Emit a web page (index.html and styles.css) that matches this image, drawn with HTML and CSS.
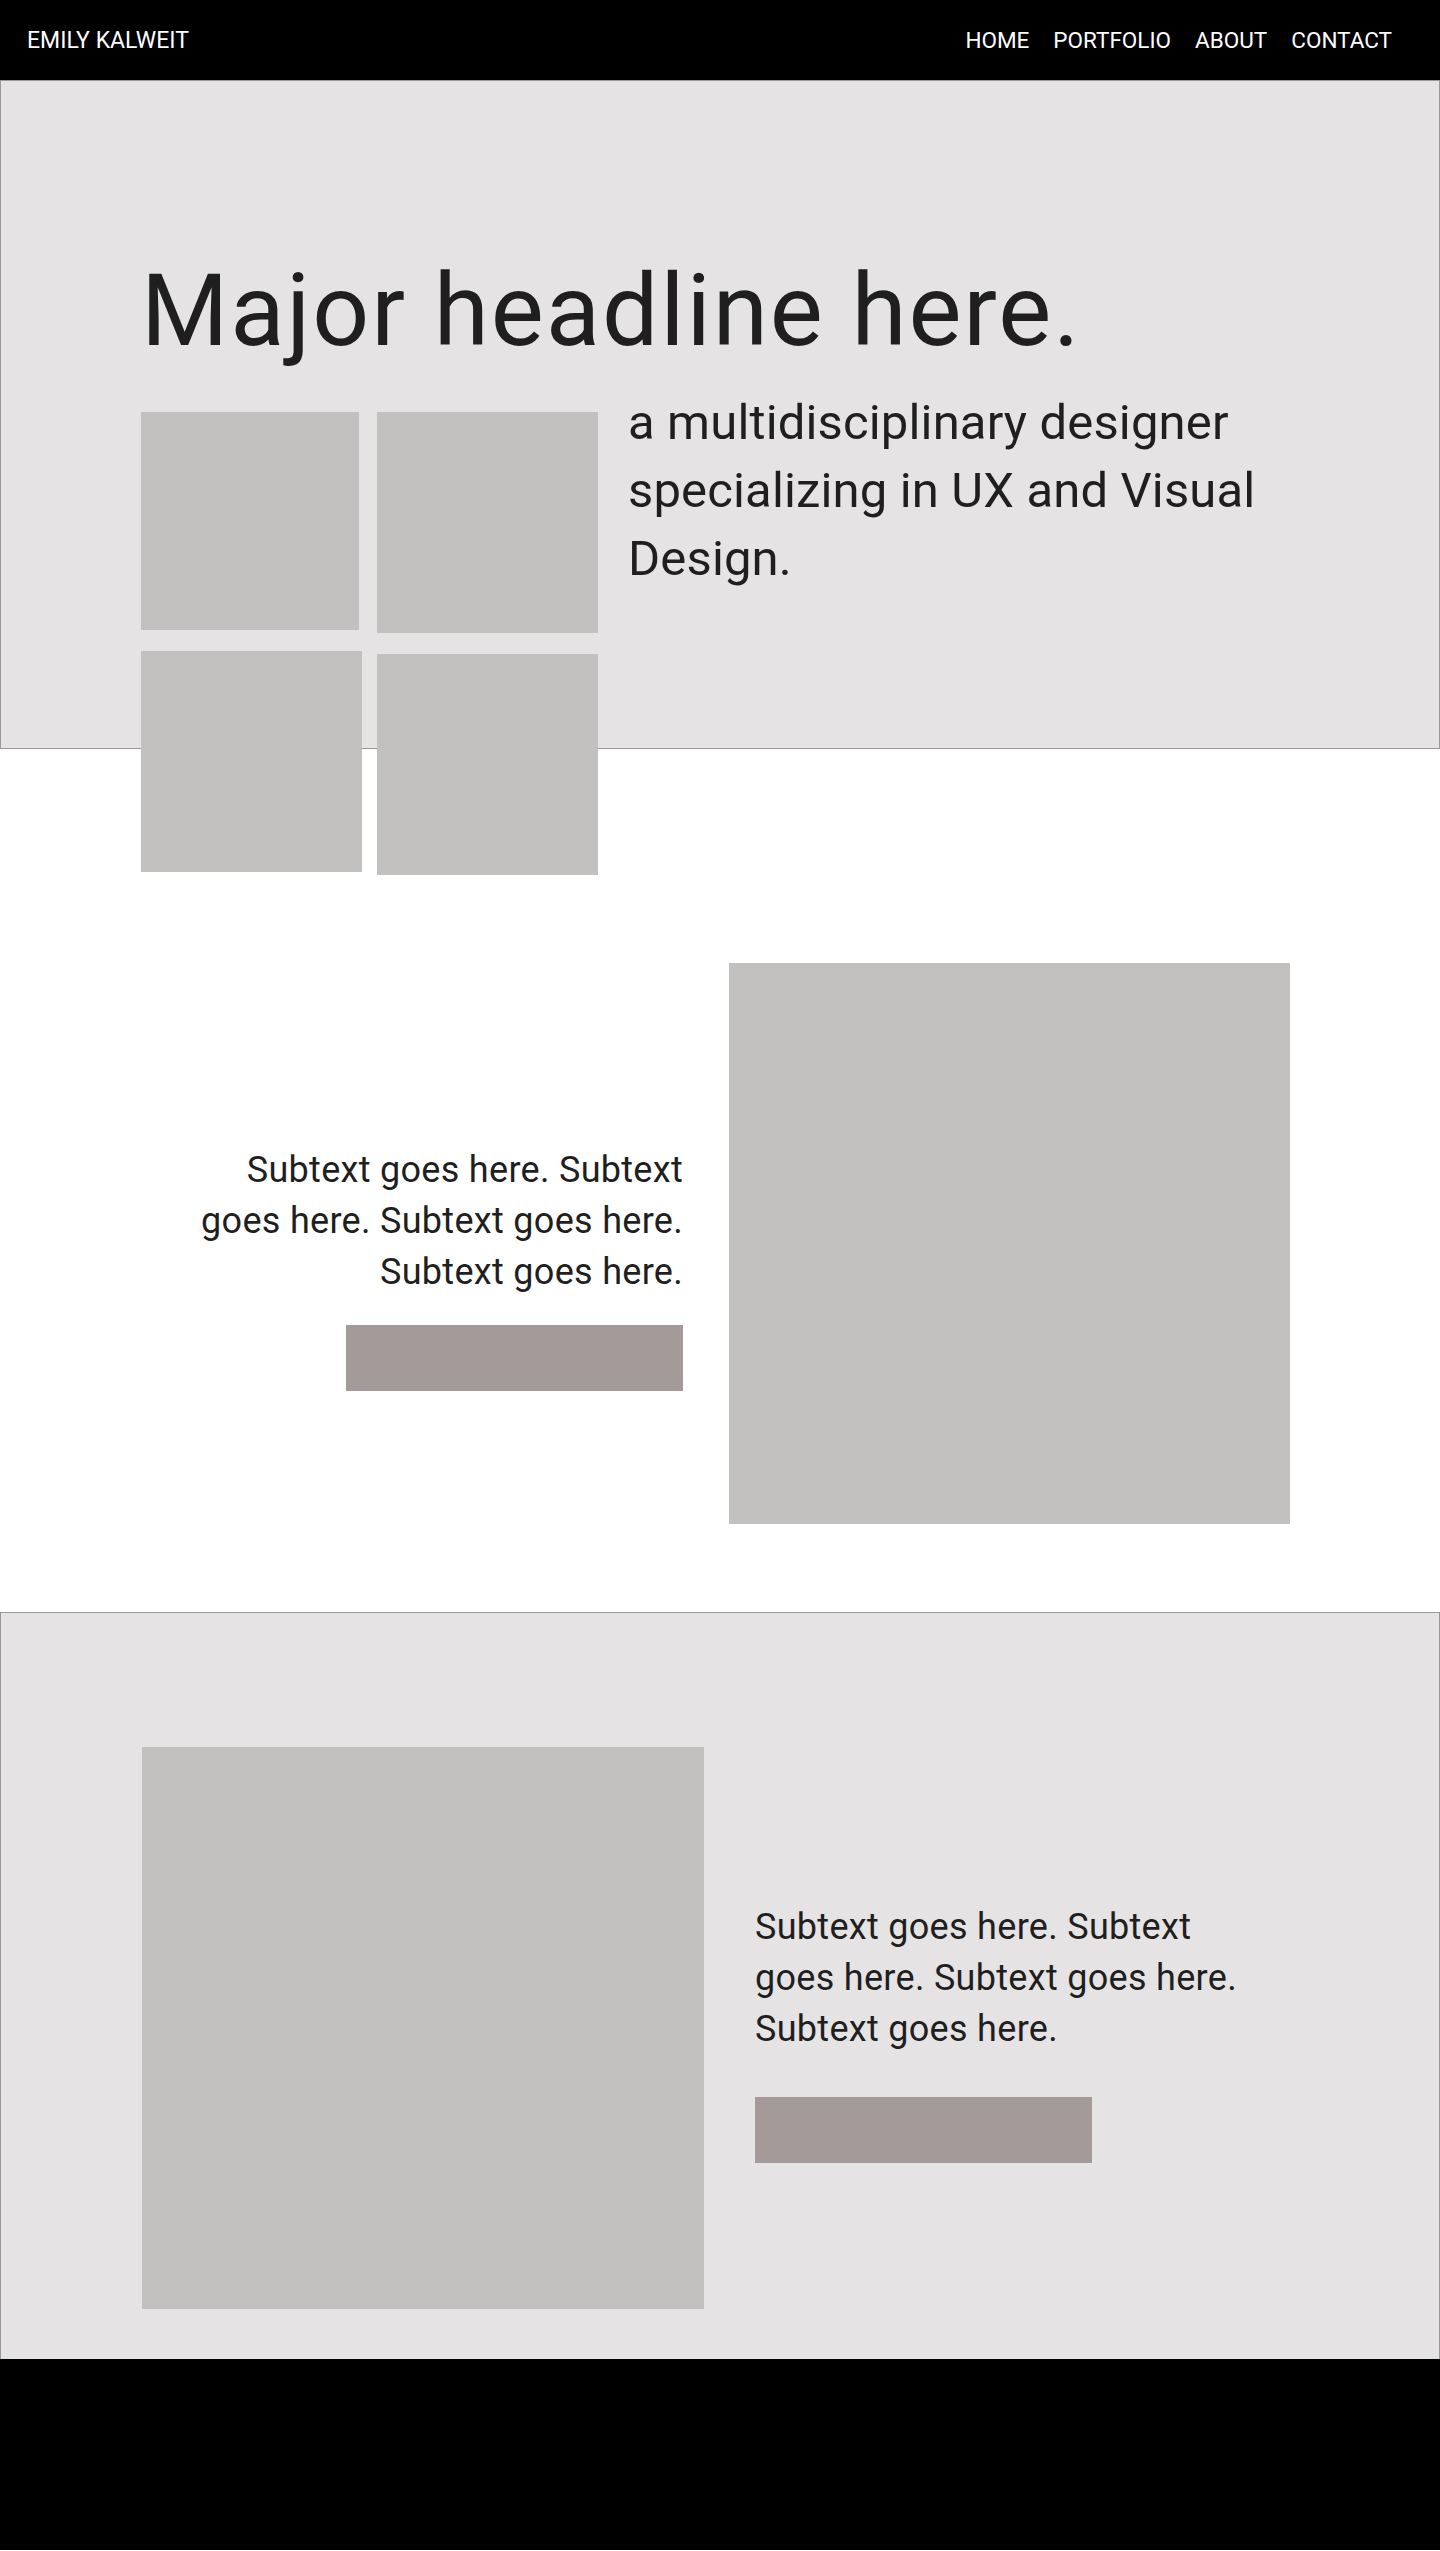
FILE: index.html
```html
<!DOCTYPE html>
<html lang="en">
<head>
  <meta charset="UTF-8">
  <meta name="viewport" content="width=device-width, initial-scale=1.0">
  <title>Emily Kalweit</title>
  <link rel="stylesheet" href="styles.css">
</head>
<body>
  <header class="topbar">
    <div class="brand">EMILY KALWEIT</div>
    <nav class="menu">
      <a href="#">HOME</a>
      <a href="#">PORTFOLIO</a>
      <a href="#">ABOUT</a>
      <a href="#">CONTACT</a>
    </nav>
  </header>

  <section class="hero">
    <h1 class="headline">Major headline here.</h1>
    <div class="hero-row">
      <div class="tiles">
        <div class="tile-col">
          <div class="tile tile-small"></div>
          <div class="tile"></div>
        </div>
        <div class="tile-col">
          <div class="tile"></div>
          <div class="tile"></div>
        </div>
      </div>
      <p class="intro">a multidisciplinary designer specializing in UX and Visual Design.</p>
    </div>
  </section>

  <section class="feature">
    <div class="feature-text">
      <p class="subtext">Subtext goes here. Subtext goes here. Subtext goes here. Subtext goes here.</p>
      <a class="cta" href="#"></a>
    </div>
    <div class="photo"></div>
  </section>

  <section class="feature feature-alt">
    <div class="photo"></div>
    <div class="feature-text">
      <p class="subtext">Subtext goes here. Subtext goes here. Subtext goes here. Subtext goes here.</p>
      <a class="cta" href="#"></a>
    </div>
  </section>

  <footer class="footer"></footer>
</body>
</html>
```

FILE: styles.css
```css
* {
  box-sizing: border-box;
}
body {
  margin: 0;
  font-family: Roboto, "Open Sans", sans-serif;
  color: #1f1f1f;
  background: #fff;
}

/* 顶部导航 */
.topbar {
  height: 80px;
  background: #000;
  color: #fff;
  display: flex;
  align-items: center;
  justify-content: space-between;
  padding: 0 48px 0 27px;
  font-size: 23px;
}
.menu {
  display: flex;
  gap: 24px;
  font-size: 22.5px;
}
.menu a {
  color: #fff;
  text-decoration: none;
}

/* hero 部分 */
.hero {
  height: 669px;
  background: #e5e3e4;
  border: 1px solid #999;
  padding: 170px 150px 0 140px;
}
.headline {
  margin: 0;
  font-size: 100px;
  font-weight: 400;
  line-height: 1.2;
  letter-spacing: 1.9px;
}
.hero-row {
  display: flex;
  margin-top: 18px;
}
.tiles {
  display: flex;
  gap: 15px;
  margin-top: 23px;
  flex-shrink: 0;
}
.tile-col {
  display: flex;
  flex-direction: column;
  gap: 21px;
}
.tile {
  width: 221px;
  height: 221px;
  background: #c2c1bf;
}
.tile-small {
  width: 218px;
  height: 218px;
}
.intro {
  margin: 0 0 0 30px;
  width: 650px;
  font-size: 49px;
  line-height: 68px;
  letter-spacing: 0.15px;
}

/* 内容区块 */
.feature {
  display: flex;
  align-items: center;
  padding: 214px 150px 88px 140px;
  gap: 46px;
}
.feature-text {
  flex: 1;
  display: flex;
  flex-direction: column;
  align-items: flex-end;
  margin-top: 49px;
}
.subtext {
  margin: 0;
  max-width: 495px;
  font-size: 36px;
  line-height: 51px;
  letter-spacing: 0.3px;
  text-align: right;
}
.cta {
  display: block;
  width: 337px;
  height: 66px;
  margin-top: 27px;
  background: #a49a99;
}
.photo {
  width: 561px;
  height: 561px;
  flex-shrink: 0;
  background: #c2c1bf;
}

.feature-alt {
  background: #e5e3e4;
  border: 1px solid #999;
  border-bottom: 0;
  padding: 134px 150px 50px 141px;
  gap: 51px;
}
.feature-alt .photo {
  width: 562px;
  height: 562px;
}
.feature-alt .feature-text {
  align-items: flex-start;
  margin-top: 0;
  padding-top: 8px;
}
.feature-alt .subtext {
  text-align: left;
  max-width: 490px;
}
.feature-alt .cta {
  margin-top: 42px;
}

.footer {
  height: 191px;
  background: #000;
}
```
